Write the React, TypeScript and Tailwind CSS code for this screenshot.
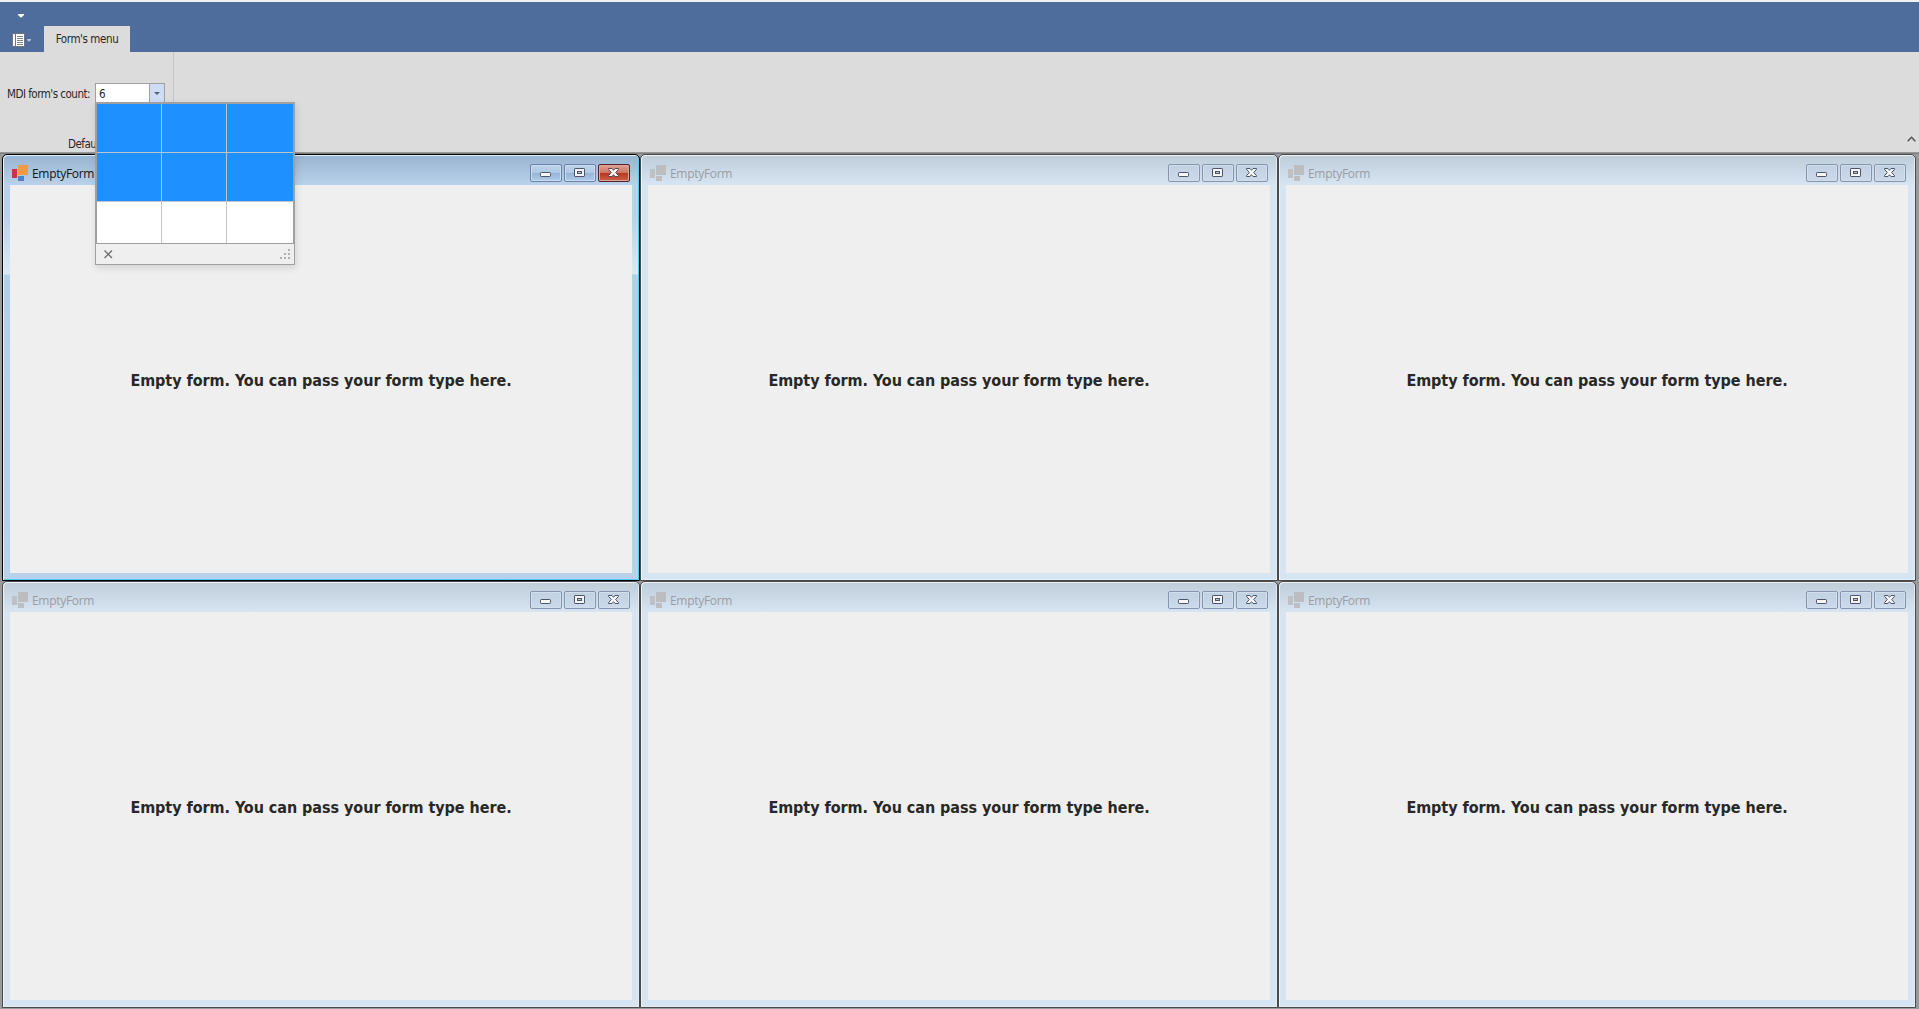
import React from "react";

const tahoma = "font-['DejaVu_Sans_Condensed','DejaVu_Sans',sans-serif]";

function Glyph({ kind, active }: { kind: "min" | "max" | "close"; active: boolean }) {
  const stroke = "#4b5468";
  return (
    <svg width="30" height="16" viewBox="0 0 30 16" className="block">
      {kind === "min" && <rect x="9.5" y="7.5" width="10" height="4" rx="0.8" fill="#f6f6f6" stroke={stroke} />}
      {kind === "max" && (
        <>
          <rect x="9.5" y="3.5" width="10" height="8" rx="0.6" fill="#f6f6f6" stroke={stroke} />
          <rect x="12.5" y="6.5" width="4" height="2" fill="#b8c8dc" stroke={stroke} />
        </>
      )}
      {kind === "close" && (
        <path
          d="M9.5 3.5H13L14.5 5.3L16 3.5H19.5V4.3L16.7 7.5L19.5 10.7V11.5H16L14.5 9.7L13 11.5H9.5V10.7L12.3 7.5L9.5 4.3Z"
          fill="#f8f8f8"
          stroke={active ? "#5d4450" : stroke}
        />
      )}
    </svg>
  );
}

function CaptionButton({ kind, active }: { kind: "min" | "max" | "close"; active: boolean }) {
  const look = !active
    ? "border-[#8495b0] bg-linear-to-b from-[#c2d1e2] to-[#cbd9ea] shadow-[inset_0_0_0_1px_#d2deeb]"
    : kind === "close"
      ? "border-[#54202a] bg-[linear-gradient(#dea195_0%,#cf7563_48%,#b8351e_50%,#c9614a_100%)] shadow-[inset_0_0_0_1px_#e0a599]"
      : "border-[#6a83a8] bg-[linear-gradient(#bfd4eb_0%,#afc9e5_48%,#96b4d6_50%,#b0cbe8_100%)] shadow-[inset_0_0_0_1px_#cbdcef]";
  return (
    <button className={`h-[18px] w-8 rounded-[2px] border ${look}`}>
      <Glyph kind={kind} active={active} />
    </button>
  );
}

function FormIcon({ active }: { active: boolean }) {
  return (
    <svg width="16" height="16" viewBox="0 0 16 16" shapeRendering="crispEdges">
      <rect x="0" y="4" width="5" height="9" fill={active ? "#cd3048" : "#bfc0c4"} />
      <rect x="6" y="0" width="10" height="10" fill={active ? "#f09a45" : "#bcbdc0"} />
      <rect x="6" y="11" width="6" height="5" fill={active ? "#4b84c6" : "#bcbec2"} />
    </svg>
  );
}

function ChildWindow({ active = false }: { active?: boolean }) {
  return (
    <section className="h-[427px] w-[638px] bg-[#9a9a9a]">
      <div
        className={`flex h-full flex-col rounded-t-[5px] border px-[7px] pb-[7px] ${
          active
            ? "border-black bg-[linear-gradient(#99b4d1_0px,#b9d1ea_30px,#b9d1ea_60px,#dbe9f7_119px,#b4cfe8_120px,#b9d1ea_100%)] shadow-[inset_1px_1px_0_#e8f0f8,inset_-1px_-1px_0_#4fd0e8]"
            : "border-[#4a4a4c] bg-[linear-gradient(#bfcddb_0px,#d7e4f2_30px,#d7e4f2_100%)] shadow-[inset_1px_1px_0_#eef3f8,inset_-1px_-1px_0_#e3edf6]"
        }`}
      >
        <header className="flex h-[30px] shrink-0 items-start pr-[2px] pl-[2px]">
          <div className="flex items-start gap-1 pt-[10px]">
            <FormIcon active={active} />
            <span
              className={`pt-px font-['Open_Sans',sans-serif] text-[12px] leading-4 tracking-[-0.3px] ${
                active ? "text-[#101418]" : "text-[#999da3]"
              }`}
            >
              EmptyForm
            </span>
          </div>
          <div className="ml-auto flex gap-[2px] pt-[9px]">
            <CaptionButton kind="min" active={active} />
            <CaptionButton kind="max" active={active} />
            <CaptionButton kind="close" active={active} />
          </div>
        </header>
        <div className="flex flex-1 items-center justify-center bg-[#efefef] pt-[3px]">
          <p className={`${tahoma} text-[16px] leading-5 font-bold tracking-[-0.05px] whitespace-nowrap text-[#282828]`}>
            Empty form. You can pass your form type here.
          </p>
        </div>
      </div>
    </section>
  );
}

function CountPopup() {
  return (
    <div className="absolute top-[102px] left-[95px] z-10 h-[163px] w-[200px] border border-[#a0a0a0] bg-[#efefef] shadow-[1px_3px_7px_rgba(0,0,0,0.12)]">
      <div className="-mx-px grid h-[141px] w-[200px] grid-cols-[64px_64px_66px] grid-rows-[48px_48px_41px] gap-px border-x-2 border-t border-b border-[#a0a0a0] bg-[#c0c4c8]">
        {[1, 2, 3, 4, 5, 6, 7, 8, 9].map((n) => (
          <div key={n} className={n <= 6 ? "bg-[#1e90ff]" : "bg-white"} />
        ))}
      </div>
      <div className="flex h-5 items-center justify-between pr-[3px] pl-2">
        <svg width="9" height="9" viewBox="0 0 9 9">
          <path d="M0.5 0.5L8 8M8 0.5L0.5 8" stroke="#6c6c6c" strokeWidth="1.3" />
        </svg>
        <svg width="11" height="11" viewBox="0 0 11 11" fill="#b0b0b0" shapeRendering="crispEdges">
          <path d="M8 0h2v2h-2zM4 4h2v2h-2zM8 4h2v2h-2zM0 8h2v2h-2zM4 8h2v2h-2zM8 8h2v2h-2z" />
        </svg>
      </div>
    </div>
  );
}

export default function App() {
  return (
    <div className="relative h-[1009px] w-[1919px] overflow-hidden bg-[#9a9a9a]">
      <div className="h-[2px] bg-[#f0f0f0]" />
      <div className="h-[50px] bg-[#4e6d9c]">
        <div className="flex h-6 items-center pl-[18px]">
          <svg width="6" height="4" viewBox="0 0 6 4" className="mt-1">
            <path d="M0 0H6V1L3.5 3.5H2.5L0 1Z" fill="#fff" />
          </svg>
        </div>
        <div className="flex h-[26px]">
          <div className="flex w-11 items-center pt-[2px] pl-3">
            <svg width="13" height="14" viewBox="0 0 13 14" shapeRendering="crispEdges">
              <rect width="13" height="14" fill="#6d7480" />
              <rect x="1" y="1" width="2" height="12" fill="#fff" />
              <rect x="4" y="1" width="8" height="12" fill="#fff" />
              <path d="M5 3.5h6M5 5.5h6M5 7.5h6M5 9.5h6M5 11.5h6" stroke="#858585" />
            </svg>
            <svg width="4" height="3" viewBox="0 0 4 3" className="ml-[2px]">
              <path d="M0 0H4V1L2.5 2.5H1.5L0 1Z" fill="#b6c2d4" />
            </svg>
          </div>
          <div
            className={`${tahoma} flex w-[86px] items-center justify-center bg-[#dcdcdc] pt-[2px] text-[11px] tracking-[-0.4px] text-[#282828]`}
          >
            <span className="text-[11.5px]">Form's menu</span>
          </div>
        </div>
      </div>
      <div className="flex h-[100px] bg-[#dcdcdc]">
        <div
          className={`${tahoma} flex w-[174px] flex-col border-r border-[#c4c4c4] text-[11.5px] leading-[14px] tracking-[-0.5px] text-[#282828]`}
        >
          <div className="mt-[31px] flex h-5 items-center pl-[7px]">
            <span className="w-[88px] pt-px whitespace-nowrap">MDI form's count:</span>
            <div className="flex h-5 w-[70px] border border-[#a0a0a0] bg-white">
              <span className="flex-1 pt-[3px] pl-[3px]">6</span>
              <span className="flex w-[15px] items-center justify-center border-l border-[#a0a0a0] bg-[#cfdcf5]">
                <svg width="6" height="3" viewBox="0 0 6 3">
                  <path d="M0 0H6L3 3Z" fill="#59616e" />
                </svg>
              </span>
            </div>
          </div>
          <div className="mt-auto mb-px pl-[68px]">Default</div>
        </div>
        <div className="flex flex-1 items-end justify-end pr-[3px] pb-[10px]">
          <svg width="9" height="6" viewBox="0 0 9 6">
            <path d="M0.7 5.2L4.5 1.3L8.3 5.2" fill="none" stroke="#555" strokeWidth="1.6" />
          </svg>
        </div>
      </div>
      <div className="h-[2px] bg-linear-to-b from-[#a5a5a5] to-[#727272]" />
      <main className="ml-[2px] grid w-[1914px] grid-cols-3">
        <ChildWindow active />
        <ChildWindow />
        <ChildWindow />
        <ChildWindow />
        <ChildWindow />
        <ChildWindow />
      </main>
      <CountPopup />
    </div>
  );
}
